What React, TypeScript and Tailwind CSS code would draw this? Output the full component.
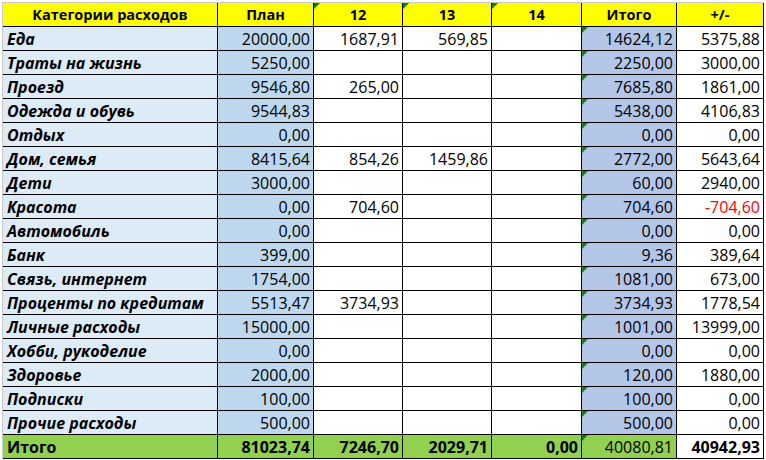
import React from "react";

type Row = {
  name: string;
  plan: string;
  c12: string;
  c13: string;
  c14: string;
  total: string;
  diff: string;
  red?: boolean;
};

const rows: Row[] = [
  { name: "Еда", plan: "20000,00", c12: "1687,91", c13: "569,85", c14: "", total: "14624,12", diff: "5375,88" },
  { name: "Траты на жизнь", plan: "5250,00", c12: "", c13: "", c14: "", total: "2250,00", diff: "3000,00" },
  { name: "Проезд", plan: "9546,80", c12: "265,00", c13: "", c14: "", total: "7685,80", diff: "1861,00" },
  { name: "Одежда и обувь", plan: "9544,83", c12: "", c13: "", c14: "", total: "5438,00", diff: "4106,83" },
  { name: "Отдых", plan: "0,00", c12: "", c13: "", c14: "", total: "0,00", diff: "0,00" },
  { name: "Дом, семья", plan: "8415,64", c12: "854,26", c13: "1459,86", c14: "", total: "2772,00", diff: "5643,64" },
  { name: "Дети", plan: "3000,00", c12: "", c13: "", c14: "", total: "60,00", diff: "2940,00" },
  { name: "Красота", plan: "0,00", c12: "704,60", c13: "", c14: "", total: "704,60", diff: "-704,60", red: true },
  { name: "Автомобиль", plan: "0,00", c12: "", c13: "", c14: "", total: "0,00", diff: "0,00" },
  { name: "Банк", plan: "399,00", c12: "", c13: "", c14: "", total: "9,36", diff: "389,64" },
  { name: "Связь, интернет", plan: "1754,00", c12: "", c13: "", c14: "", total: "1081,00", diff: "673,00" },
  { name: "Проценты по кредитам", plan: "5513,47", c12: "3734,93", c13: "", c14: "", total: "3734,93", diff: "1778,54" },
  { name: "Личные расходы", plan: "15000,00", c12: "", c13: "", c14: "", total: "1001,00", diff: "13999,00" },
  { name: "Хобби, рукоделие", plan: "0,00", c12: "", c13: "", c14: "", total: "0,00", diff: "0,00" },
  { name: "Здоровье", plan: "2000,00", c12: "", c13: "", c14: "", total: "120,00", diff: "1880,00" },
  { name: "Подписки", plan: "100,00", c12: "", c13: "", c14: "", total: "100,00", diff: "0,00" },
  { name: "Прочие расходы", plan: "500,00", c12: "", c13: "", c14: "", total: "500,00", diff: "0,00" },
];

const Tri = () => (
  <span
    className="absolute left-0 top-0 h-0 w-0"
    style={{ borderTop: "6px solid #1a7d1a", borderRight: "6px solid transparent" }}
  />
);

const cell = "relative flex h-full items-center pt-[1px] border-r border-black";

export default function App() {
  return (
    <div
      className="h-[460px] w-[766px] bg-white text-black"
      style={{ fontFamily: "'Open Sans', 'Liberation Sans', sans-serif" }}
    >
      <div className="ml-[2px] mt-[2px] w-[762px] border-l border-t border-[#c8c8c8] text-[16px] leading-none">
        {/* header */}
        <div className="flex h-[24px] border-b border-black bg-[#ffff00] text-[14.5px] font-bold">
          <div className={`${cell} w-[215px] justify-center`}>Категории расходов</div>
          <div className={`${cell} w-[96px] justify-center`}>План</div>
          <div className={`${cell} w-[89px] justify-center`}><Tri />12</div>
          <div className={`${cell} w-[89px] justify-center`}><Tri />13</div>
          <div className={`${cell} w-[90px] justify-center`}><Tri />14</div>
          <div className={`${cell} w-[95px] justify-center`}>Итого</div>
          <div className={`${cell} w-[87px] justify-center`}>+/-</div>
        </div>
        {rows.map((r) => (
          <div key={r.name} className="flex h-[24px] border-b border-black">
            <div className={`${cell} w-[215px] bg-[#ddebf7] pl-[4px] font-bold italic`}>{r.name}</div>
            <div className={`${cell} w-[96px] justify-end bg-[#bdd7ee] pr-[3px]`}>{r.plan}</div>
            <div className={`${cell} w-[89px] justify-end pr-[3px]`}>{r.c12}</div>
            <div className={`${cell} w-[89px] justify-end pr-[3px]`}>{r.c13}</div>
            <div className={`${cell} w-[90px] justify-end pr-[3px]`}>{r.c14}</div>
            <div className={`${cell} w-[95px] justify-end bg-[#b4c6e7] pr-[3px]`}><Tri />{r.total}</div>
            <div className={`${cell} w-[87px] justify-end pr-[3px] ${r.red ? "text-[#ff0000]" : ""}`}>{r.diff}</div>
          </div>
        ))}
        <div className="flex h-[24px] border-b border-black bg-[#92d050]">
          <div className={`${cell} w-[215px] pl-[4px] font-bold`}>Итого</div>
          <div className={`${cell} w-[96px] justify-end pr-[3px] font-bold`}>81023,74</div>
          <div className={`${cell} w-[89px] justify-end pr-[3px] font-bold`}>7246,70</div>
          <div className={`${cell} w-[89px] justify-end pr-[3px] font-bold`}>2029,71</div>
          <div className={`${cell} w-[90px] justify-end pr-[3px] font-bold`}>0,00</div>
          <div className={`${cell} w-[95px] justify-end pr-[3px]`}><Tri />40080,81</div>
          <div className={`${cell} w-[87px] justify-end bg-white pr-[3px] font-bold`}>40942,93</div>
        </div>
      </div>
    </div>
  );
}
